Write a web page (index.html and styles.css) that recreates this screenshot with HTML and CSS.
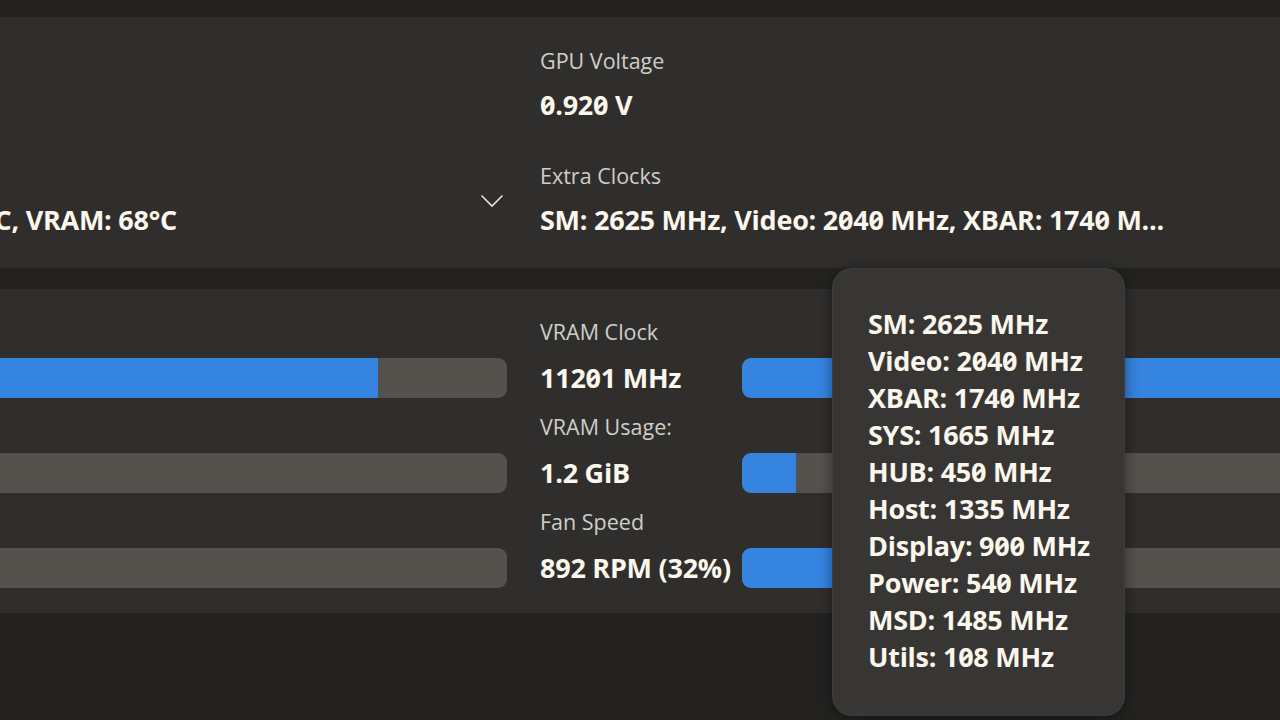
FILE: index.html
```html
<!DOCTYPE html>
<html>
<head>
<meta charset="utf-8">
<link rel="stylesheet" href="styles.css">
</head>
<body>
<div class="page">
  <section class="card card-info">
    <div class="col">
      <div class="stat">
        <div class="label">Power Cap</div>
        <div class="value">250 W</div>
      </div>
      <div class="stat stat-expander">
        <div class="stat-text">
          <div class="label">Temperatures</div>
          <div class="value">GPU: 45°C, Hot: 56°C, VRAM: 68°C</div>
        </div>
        <svg class="chevron" width="24" height="14" viewBox="0 0 24 14"><path d="M1.5 1.5 L12 12 L22.5 1.5" fill="none" stroke="#e4e1dc" stroke-width="1.6"/></svg>
      </div>
    </div>
    <div class="col">
      <div class="stat">
        <div class="label">GPU Voltage</div>
        <div class="value">0.920 V</div>
      </div>
      <div class="stat">
        <div class="label">Extra Clocks</div>
        <div class="value">SM: 2625 MHz, Video: 2040 MHz, XBAR: 1740 M...</div>
      </div>
    </div>
  </section>

  <section class="card card-bars">
    <div class="col">
      <div class="stat">
        <div class="label">GPU Clock</div>
        <div class="vrow"><span class="value">2625 MHz</span><div class="bar"><div class="fill" style="width:76.9%"></div></div></div>
      </div>
      <div class="stat">
        <div class="label">GPU Usage</div>
        <div class="vrow"><span class="value">3%</span><div class="bar"><div class="fill" style="width:3%"></div></div></div>
      </div>
      <div class="stat">
        <div class="label">Power Usage</div>
        <div class="vrow"><span class="value">21 W</span><div class="bar"><div class="fill" style="width:0%"></div></div></div>
      </div>
    </div>
    <div class="col">
      <div class="stat">
        <div class="label">VRAM Clock</div>
        <div class="vrow"><span class="value">11201 MHz</span><div class="bar"><div class="fill" style="width:100%"></div></div></div>
      </div>
      <div class="stat">
        <div class="label">VRAM Usage:</div>
        <div class="vrow"><span class="value">1.2 GiB</span><div class="bar"><div class="fill" style="width:9.7%"></div></div></div>
      </div>
      <div class="stat">
        <div class="label">Fan Speed</div>
        <div class="vrow"><span class="value">892 RPM (32%)</span><div class="bar"><div class="fill" style="width:32%"></div></div></div>
      </div>
    </div>
  </section>

  <div class="tooltip">
    <div class="tip-line">SM: 2625 MHz</div>
    <div class="tip-line">Video: 2040 MHz</div>
    <div class="tip-line">XBAR: 1740 MHz</div>
    <div class="tip-line">SYS: 1665 MHz</div>
    <div class="tip-line">HUB: 450 MHz</div>
    <div class="tip-line">Host: 1335 MHz</div>
    <div class="tip-line">Display: 900 MHz</div>
    <div class="tip-line">Power: 540 MHz</div>
    <div class="tip-line">MSD: 1485 MHz</div>
    <div class="tip-line">Utils: 108 MHz</div>
  </div>
</div>
</body>
</html>
```

FILE: styles.css
```css
html, body {
  margin: 0;
  padding: 0;
  background: #232221;
  overflow: hidden;
  width: 1280px;
  height: 720px;
}

body {
  font-family: "Open Sans", "Noto Sans", sans-serif;
  color: #fbf7ec;
}

.page {
  position: relative;
  width: 1553px;
  margin-left: -253px;
  padding-top: 17px;
}

.card {
  background: #2f2e2d;
  display: grid;
  grid-template-columns: 760px 760px;
  column-gap: 33px;
}

.card-info {
  padding: 30px 0 31px;
  height: 251px;
  box-sizing: border-box;
}

.card-bars {
  margin-top: 21px;
  padding: 29px 0 25px;
  height: 324px;
  box-sizing: border-box;
}

.col {
  display: flex;
  flex-direction: column;
}

.card-info .col {
  gap: 40px;
}

.card-bars .col {
  gap: 15px;
}

.label {
  font-size: 21.5px;
  line-height: 28px;
  font-weight: 400;
  color: #d0cec9;
  white-space: nowrap;
}

.value {
  font-size: 27px;
  line-height: 34px;
  font-weight: 700;
  letter-spacing: -0.25px;
  color: #fbf7ec;
  white-space: nowrap;
  font-variant-numeric: tabular-nums slashed-zero;
}

.card-info .label {
  margin-bottom: 13px;
}

.card-bars .label {
  margin-bottom: 12px;
}

.stat-expander {
  display: flex;
  align-items: center;
  justify-content: space-between;
}

.chevron {
  margin-right: 3px;
  margin-top: 3px;
}

.vrow {
  display: grid;
  grid-template-columns: 202px 1fr;
  align-items: center;
  height: 40px;
}

.bar {
  height: 40px;
  border-radius: 9px;
  background: #55524e;
  overflow: hidden;
}

.fill {
  height: 100%;
  background: #3584e0;
}

.tooltip {
  position: absolute;
  left: 1085px;
  top: 268px;
  width: 293px;
  height: 448px;
  box-sizing: border-box;
  padding: 37px 36px;
  background: #373634;
  border-radius: 20px;
  box-shadow: 0 2px 14px rgba(0, 0, 0, 0.45), inset 0 0 0 1px rgba(255, 255, 255, 0.04);
}

.tip-line {
  font-size: 27px;
  line-height: 37px;
  font-weight: 700;
  letter-spacing: -0.25px;
  color: #fbf7ec;
  white-space: nowrap;
  font-variant-numeric: tabular-nums slashed-zero;
}
```
